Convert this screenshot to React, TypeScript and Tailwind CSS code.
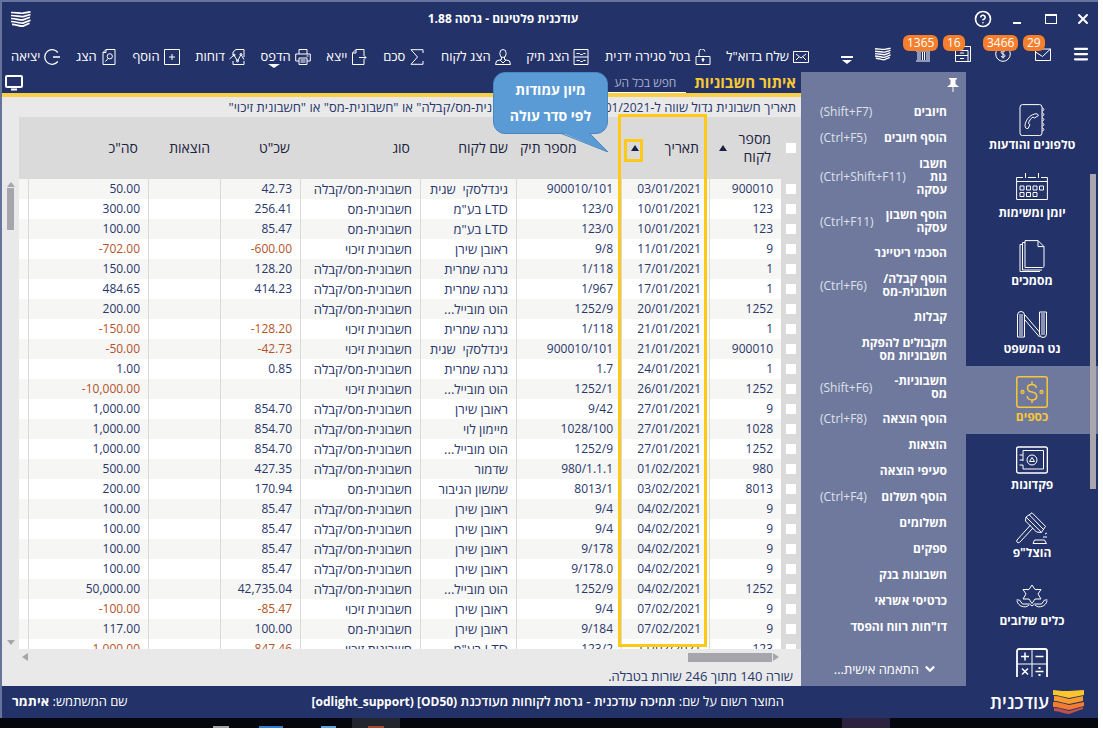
import type { ReactNode } from "react";
import { X, CircleHelp, Menu, ChevronDown } from "lucide-react";

interface IconProps {
  children: ReactNode;
  size?: string;
  box?: string;
}

const Icon = ({ children, size = "size-4", box = "0 0 16 16" }: IconProps) => (
  <svg className={`${size} shrink-0`} viewBox={box} fill="none" stroke="currentColor" strokeWidth="1" aria-hidden="true">
    {children}
  </svg>
);

const Pages = ({ size }: { size: string }) => (
  <svg className={`${size} shrink-0`} viewBox="0 0 20 16" fill="none" stroke="currentColor" strokeWidth="1.7" aria-hidden="true">
    <path d="M0 1.5C5 1.500 9 2.500 12 2.200L19.500.8M0 4.500C5 4.500 9 6 12 5.600L19.500 3.500M0 7.500C5 7.500 9 9.300 12 8.900L19 6.300M0 10.500C5 10.500 9 12.500 12 12.100L19.500 9.200M1 13.300C5 13.300 9 15.500 12 15.100L18.500 12.300" />
  </svg>
);

const actions: { label: string; icon: ReactNode; arrow?: boolean }[] = [
  {
    label: 'שלח בדוא"ל',
    icon: <Icon><path d="M.5 2.500h15v11H.5zM3 5l5 4 5-4M3 11l3-3M13 11l-3-3" /></Icon>,
  },
  {
    label: "בטל סגירה ידנית",
    icon: <Icon><path d="M1 7.500h14v8H1zM4 7.500V3.500a3 3 0 0 1 6-1M8 10v3" /><circle cx="8" cy="10.500" r="1" fill="currentColor" /></Icon>,
  },
  {
    label: "הצג תיק",
    icon: <Icon><path d="M1 .5h14v15H1zM1 8h14M3.500 4.500h3l1 1h2l1-1h2M3.500 11.500h3l1 1h2l1-1h2" /></Icon>,
  },
  {
    label: "הצג לקוח",
    icon: <Icon><ellipse cx="8" cy="4.500" rx="3.200" ry="4" /><path d="M6.500 8v2.500L1.500 12 .5 15.500h15l-1-3.500-5-1.500V8M5 11l3 3 3-3" /></Icon>,
  },
  {
    label: "סכם",
    icon: <Icon><path d="M14 4V.7H2L8.500 8 2 15.300h12V12" /></Icon>,
  },
  {
    label: "ייצא",
    icon: <Icon><path d="M13 6V.5H5L1.500 4v11.500H13V11M8 8.500h7M12.500 6l2.500 2.500-2.500 2.500M1.500 4H5V.5" /></Icon>,
  },
  {
    label: "הדפס",
    arrow: true,
    icon: <Icon><path d="M4 5V.5h8V5M4 12H.7V5h14.600v7H12M4 9h8v6.500H4zM5.500 11h5M5.500 13h5M11.500 7h2" /></Icon>,
  },
  {
    label: "דוחות",
    icon: <Icon><path d="M4 6V3l3-2.500h8V8M4 12v3.500h11V12M.5 10 5 6l3.500 6L12 5.500l3 5" /><circle cx="5" cy="6" r="1" /><circle cx="8.500" cy="12" r="1" /><circle cx="12" cy="5.500" r="1" /></Icon>,
  },
  {
    label: "הוסף",
    icon: <Icon><path d="M.5.5h15v15H.5zM8 5v6M5 8h6" /></Icon>,
  },
  {
    label: "הצג",
    icon: <Icon><path d="M5 .5h9v15H2V3.500zM2 3.500h3v-3M7 9.500 4.500 12.500" /><circle cx="8.800" cy="7.300" r="2.600" /></Icon>,
  },
  {
    label: "יציאה",
    icon: <Icon><path d="M13.800 3.500a7.300 7.300 0 1 0 0 9M9 8h7" strokeWidth="1.300" /></Icon>,
  },
];

const alerts = [
  { count: 29, label: "הודעות", icon: <Icon><path d="M.5 3h15v11.500H.5zM.5 6l7 4.500L15.500 3" /></Icon> },
  { count: 3466, label: "חיובים פתוחים", icon: <Icon><circle cx="8" cy="8" r="7.300" /><path d="M10 5.500C9 4.500 6 4.500 6 6.300S10 8 10 9.800 7 11.500 6 10.300M8 3.500v9" /></Icon> },
  { count: 16, label: "תיקים", icon: <Icon><path d="M4 .5h11.500v15M.5 4.500H13v11H.5zM.5 9.500H13M5 12.500h4M5 7h4M15.500 15.500H13" /></Icon> },
  { count: 1365, label: "בנקים", icon: <Icon><path d="M1 5 8 1l7 4zM3 6v8M5 6v8M7.500 6v8M9.500 6v8M12 6v8M14 6v8M1 15h14" /></Icon> },
];

const menu: { label: string; keys?: string }[] = [
  { label: "חיובים", keys: "(Shift+F7)" },
  { label: "הוסף חיובים", keys: "(Ctrl+F5)" },
  { label: "חשבו\nנות\nעסקה", keys: "(Ctrl+Shift+F11)" },
  { label: "הוסף חשבון\nעסקה", keys: "(Ctrl+F11)" },
  { label: "הסכמי ריטיינר" },
  { label: "הוסף קבלה/\nחשבונית-מס", keys: "(Ctrl+F6)" },
  { label: "קבלות" },
  { label: "תקבולים להפקת\nחשבוניות מס" },
  { label: "חשבוניות-\nמס", keys: "(Shift+F6)" },
  { label: "הוסף הוצאה", keys: "(Ctrl+F8)" },
  { label: "הוצאות" },
  { label: "סעיפי הוצאה" },
  { label: "הוסף תשלום", keys: "(Ctrl+F4)" },
  { label: "תשלומים" },
  { label: "ספקים" },
  { label: "חשבונות בנק" },
  { label: "כרטיסי אשראי" },
  { label: 'דו"חות רווח והפסד' },
];

const modules: { label: string; active?: boolean; iconOnly?: boolean; icon: ReactNode }[] = [
  {
    label: "טלפונים והודעות",
    icon: <><rect x="4" y=".6" width="22" height="31" rx="2.500" /><path d="M26 4c2.500 0 2.500 3 0 3M26 9c2.500 0 2.500 3 0 3M26 14c2.500 0 2.500 3 0 3M26 19c2.500 0 2.500 3 0 3M26 24c2.500 0 2.500 3 0 3" /><path d="M18.500 10c2-.6 3.500 0 4 1.500l-4 2.500-1.500-1c-2.500 1.500-4 4-4.500 6.500l1.500 1.200-2 3.800c-2 .5-3-1-3-3 .5-5 4-10 9.500-11.500z" /></>,
  },
  {
    label: "יומן ומשימות",
    icon: <><path d="M7 5.500H.6v22h30.800v-22H25M12 5.500h8M.6 9.500h30.800M9.500 1v5M22.500 1v5" /><path d="M4 14h4v4H4zM10.500 14h4v4h-4zM17 14h4v4h-4zM23.500 14h4v4h-4zM4 20.500h4v4H4zM10.500 20.500h4v4h-4zM17 20.500h4v4h-4z" /></>,
  },
  {
    label: "מסמכים",
    icon: <><path d="M9 .6h13l6 6V26c0 1-.5 1.500-1.500 1.500H9zM22 .6v6h6M9 2.500H6.500v27.500H26M6.500 4.500H4v27h20" /></>,
  },
  {
    label: "נט המשפט",
    icon: <><path d="M1.500 29V7a3.500 3.500 0 0 1 7 0v22zM23.500 4h7v22a3.500 3.500 0 0 1-7 0zM9 7l14.500 17M9 12l14.500 17" /><path d="M4 6v22M6 6v22M26 5v22M28 5v22" strokeWidth="1.600" strokeOpacity=".6" /></>,
  },
  {
    label: "כספים",
    active: true,
    icon: <><rect x=".8" y=".8" width="30.400" height="30.400" rx="2" strokeWidth="1.500" /><path d="M20.500 12c-.5-2.500-2.500-3.500-4.500-3.500-6 0-6 6.500 0 7.500 6.500 1 6 8 0 8-3 0-4.500-1.500-4.800-4M16 5.500v3M16 24v3" strokeWidth="1.500" /><circle cx="6.500" cy="16" r="1.500" strokeWidth="1.300" /><circle cx="25.500" cy="16" r="1.500" strokeWidth="1.300" /></>,
  },
  {
    label: "פקדונות",
    icon: <><rect x=".6" y="3" width="30.800" height="26" rx="2" strokeWidth="1.400" /><path d="M7 6.500h20.500v18.500H7v-4M7 11v6M3.500 11H7V6.500M3.500 21H7M3.500 16H7" /><circle cx="16" cy="16" r="5" /><path d="m16 13.500 2.500 4h-5z" /></>,
  },
  {
    label: 'הוצל"פ',
    icon: <><path d="m16 .8 13.500 13.500-4 6L10 5zM13.500 3 27.500 17.500M10 5l-.5 4 11 11 5 .5M17 16 3.500 30.500c-2 1-3.500-1-2.500-2.500L14.500 13M18.500 28h10l2 3.500H17zM27 25h4M29 22l2-1" /></>,
  },
  {
    label: "כלים שלובים",
    icon: <><path d="m16 5 3 4.500h6l-3 4.500 3 5h-6l-3 4.500-3-4.500H7l3-5-3-4.500h6z" /><path d="M.5 20h3l3 4h7l2.500 2 2.500-2h7l3-4h3M1 21c1 5 8 8 12 4M31 21c-1 5-8 8-12 4" /></>,
  },
  {
    label: "מחשבון",
    iconOnly: true,
    icon: <><path d="M1 32V3a2 2 0 0 1 2-2h26a2 2 0 0 1 2 2v29" strokeWidth="1.800" /><path d="M16 1v31M1 16h30" /><path d="M5 8.500h8M9 4.500v8M19.500 8.500h8M6 20.500l6 6M12 20.500l-6 6M19.500 23.500h8" strokeWidth="1.500" /><path d="M23.500 19v2M23.500 26v2" strokeWidth="2" /></>,
  },
];

const full = "חשבונית-מס/קבלה";
const tax = "חשבונית-מס";
const credit = "חשבונית זיכוי";

// client, date, file, client name, type, fee, total
const rows: string[][] = [
  ["900010", "03/01/2021", "900010/101", "גינדלסקי  שגית", full, "42.73", "50.00"],
  ["123", "10/01/2021", "123/0", 'LTD בע"מ', tax, "256.41", "300.00"],
  ["123", "10/01/2021", "123/0", 'LTD בע"מ', tax, "85.47", "100.00"],
  ["9", "11/01/2021", "9/8", "ראובן שירן", credit, "-600.00", "-702.00"],
  ["1", "17/01/2021", "1/118", "גרגה שמרית", full, "128.20", "150.00"],
  ["1", "17/01/2021", "1/967", "גרגה שמרית", full, "414.23", "484.65"],
  ["1252", "20/01/2021", "1252/9", "הוט מובייל...", full, "", "200.00"],
  ["1", "21/01/2021", "1/118", "גרגה שמרית", credit, "-128.20", "-150.00"],
  ["900010", "21/01/2021", "900010/101", "גינדלסקי  שגית", credit, "-42.73", "-50.00"],
  ["1", "24/01/2021", "1.7", "גרגה שמרית", full, "0.85", "1.00"],
  ["1252", "26/01/2021", "1252/1", "הוט מובייל...", credit, "", "-10,000.00"],
  ["9", "27/01/2021", "9/42", "ראובן שירן", full, "854.70", "1,000.00"],
  ["1028", "27/01/2021", "1028/100", "מיימון לוי", full, "854.70", "1,000.00"],
  ["1252", "27/01/2021", "1252/9", "הוט מובייל...", full, "854.70", "1,000.00"],
  ["980", "01/02/2021", "980/1.1.1", "שדמור", full, "427.35", "500.00"],
  ["8013", "03/02/2021", "8013/1", "שמשון הגיבור", tax, "170.94", "200.00"],
  ["9", "04/02/2021", "9/4", "ראובן שירן", full, "85.47", "100.00"],
  ["9", "04/02/2021", "9/4", "ראובן שירן", full, "85.47", "100.00"],
  ["9", "04/02/2021", "9/178", "ראובן שירן", full, "85.47", "100.00"],
  ["9", "04/02/2021", "9/178.0", "ראובן שירן", full, "85.47", "100.00"],
  ["1252", "04/02/2021", "1252/9", "הוט מובייל...", full, "42,735.04", "50,000.00"],
  ["9", "07/02/2021", "9/4", "ראובן שירן", credit, "-85.47", "-100.00"],
  ["9", "07/02/2021", "9/184", "ראובן שירן", tax, "100.00", "117.00"],
  ["123", "11/02/2021", "123/2", 'LTD בע"מ', credit, "-847.46", "-1,000.00"],
];

const TitleBar = () => (
  <div className="flex h-[33px] items-center">
    <button aria-label="סגור" className="flex w-[30px] justify-center"><X className="size-4" strokeWidth={3} /></button>
    <button aria-label="הגדל" className="flex w-[34px] justify-center"><span className="block h-[10px] w-3 border border-t-2 border-white" /></button>
    <button aria-label="מזער" className="flex w-[34px] justify-center pt-2"><span className="block h-[2px] w-2 bg-white" /></button>
    <button aria-label="עזרה" className="flex w-[34px] justify-center"><CircleHelp className="size-[18px]" strokeWidth={2.200} /></button>
    <h1 className="flex-1 text-center text-xs font-bold">עודכנית פלטינום - גרסה 1.88</h1>
    <div className="flex w-[38px] justify-center"><Pages size="h-4 w-5" /></div>
  </div>
);

const Toolbar = () => (
  <div className="flex h-[37px]">
    <button aria-label="תפריט" className="flex w-[35px] items-center justify-center"><Menu className="size-[18px]" strokeWidth={3} /></button>
    {alerts.map((a) => (
      <button key={a.count} aria-label={a.label} className="relative flex w-10 items-center justify-center">
        {a.icon}
        <span className="absolute top-0 left-0 rounded-md bg-[#f57f2c] px-1 text-xs leading-4">{a.count}</span>
      </button>
    ))}
    <button aria-label="מסמכים אחרונים" className="flex w-10 items-center justify-center"><Pages size="h-[14px] w-4" /></button>
    <button aria-label="עוד" className="flex w-8 items-center justify-center pt-3">
      <svg className="h-2 w-3" viewBox="0 0 12 8" fill="currentColor"><path d="M0 0h12v2H0zM1 4h10L6 8z" /></svg>
    </button>
    <div className="flex flex-1 items-center justify-between pt-[6px] pr-[22px] pl-[9px]">
      {actions.map((a, i) => (
        <button key={i} className="relative flex items-center gap-1 text-[13px] whitespace-nowrap">
          {a.icon}
          {a.label}
          {a.arrow && (
            <svg className="absolute -bottom-[2px] left-2 h-1 w-3" viewBox="0 0 12 4" fill="currentColor"><path d="M0 0h12L6 4z" /></svg>
          )}
        </button>
      ))}
    </div>
  </div>
);

const Modules = () => (
  <nav className="relative w-[132px] shrink-0 overflow-hidden bg-[#233269] pt-[22px] pb-[9px] text-white">
    <div className="h-full overflow-hidden">
      {modules.map((m) => (
        <a
          key={m.label}
          href="#"
          aria-label={m.label}
          className={`flex h-[68px] flex-col items-center pt-[10px] text-xs font-bold ${m.active ? "bg-[#6f799e] text-[#f9c834]" : ""}`}
        >
          <Icon size="size-8" box="0 0 32 32">{m.icon}</Icon>
          {!m.iconOnly && <span className="leading-[18px]">{m.label}</span>}
        </a>
      ))}
    </div>
    <div className="absolute top-[102px] right-[2px] h-[315px] w-[6px] bg-[#a9a7ad]" />
  </nav>
);

const SubMenu = () => (
  <aside className="flex w-[165px] shrink-0 flex-col bg-[#6f799e] text-xs text-white">
    <button aria-label="נעץ" className="mt-[6px] mr-[6px] self-start">
      <svg className="h-[14px] w-[14px]" viewBox="0 0 14 14" fill="currentColor"><path d="M3 0h8v1l-1.500 1v4L13 9H1l3.500-3V2L3 1zM6.500 9h1v5h-1z" /></svg>
    </button>
    <ul className="mt-[13px] flex flex-1 flex-col gap-3 px-[19px]">
      {menu.map((m) => (
        <li key={m.label} className="min-h-[14px]">
          <a href="#" className="flex items-center justify-between leading-[13px]">
            <span className="font-bold whitespace-pre">{m.label}</span>
            {m.keys && <span dir="ltr" className="text-[#dfe2ea]">{m.keys}</span>}
          </a>
        </li>
      ))}
    </ul>
    <button className="mr-[29px] mb-2 flex items-center gap-1 self-start text-[13px]">
      <ChevronDown className="size-[14px]" strokeWidth={4} />
      התאמה אישית...
    </button>
  </aside>
);

const SortArrow = () => (
  <svg className="h-[6px] w-2 shrink-0" viewBox="0 0 8 6" fill="currentColor" aria-hidden="true"><path d="M4 0l4 6H0z" /></svg>
);

const cell = "overflow-hidden border-l border-[#dadada] px-2 text-right whitespace-pre";
const head = "px-[10px] text-right font-normal";

const Grid = () => (
  <div className="relative min-w-0 flex-1">
    <div className="h-full overflow-hidden bg-white">
      <table className="w-full table-fixed border-separate border-spacing-0 text-xs text-[#28366b]">
        <colgroup>
          <col className="w-5" />
          <col className="w-[72px]" />
          <col className="w-[88px]" />
          <col className="w-[105px]" />
          <col className="w-[96px]" />
          <col className="w-[120px]" />
          <col className="w-[80px]" />
          <col className="w-[72px]" />
          <col className="w-[120px]" />
          <col />
        </colgroup>
        <thead className="bg-[#dadada] text-sm leading-[18px] text-[#1c2340]">
          <tr className="h-[62px]">
            <th className="p-0"><input type="checkbox" aria-label="בחר הכל" className="mx-auto block size-[10px] appearance-none bg-white" /></th>
            <th className={head}>
              <span className="flex items-center justify-between"><span>מספר<br />לקוח</span><SortArrow /></span>
            </th>
            <th className={head}>
              <span className="flex items-center justify-between">תאריך <SortArrow /></span>
            </th>
            <th className="pl-1 text-left font-normal">מספר תיק</th>
            <th className="px-2 text-right font-normal whitespace-nowrap">שם לקוח</th>
            <th className={head}>סוג</th>
            <th className={head}>{'שכ"ט'}</th>
            <th className={head}>הוצאות</th>
            <th className={head}>{'סה"כ'}</th>
            <th />
          </tr>
        </thead>
        <tbody>
          {rows.map(([client, date, file, name, type, fee, total], i) => (
            <tr key={i} className="h-5 leading-[18px] odd:bg-[#f6f6f5]">
              <td className="bg-[#dadada] p-0">
                <input type="checkbox" aria-label={`שורה ${i + 1}`} className="mx-auto block size-[10px] appearance-none bg-white" />
              </td>
              <td className={cell}>{client}</td>
              <td className={cell}>{date}</td>
              <td className={cell}>{file}</td>
              <td className={`${cell} text-[13px]`}>{name}</td>
              <td className={`${cell} text-[13px]`}>{type}</td>
              <td dir="ltr" className={`${cell} ${fee.startsWith("-") ? "text-[#b4532a]" : ""}`}>{fee}</td>
              <td className={cell} />
              <td dir="ltr" className={`${cell} ${total.startsWith("-") ? "text-[#b4532a]" : ""}`}>{total}</td>
              <td />
            </tr>
          ))}
        </tbody>
      </table>
    </div>
    <div className="absolute -top-[3px] right-[94px] bottom-[2px] w-[89px] border-3 border-[#ffc917]" />
    <div className="absolute top-[22px] right-[158px] h-[23px] w-[19px] border-3 border-[#ffc917]" />
  </div>
);

const Callout = () => (
  <div className="absolute top-0 right-[193px] w-[115px]">
    <div className="rounded-xl border border-[#4a86c0] bg-[#5b9bd5] py-1 text-center text-sm leading-[26px] font-bold text-white">
      מיון עמודות<br />לפי סדר עולה
    </div>
    <svg className="absolute top-[60px] right-0 h-5 w-12" viewBox="0 0 48 20" fill="#5b9bd5"><path d="M0 0h29l19 20z" /><path d="M0 1l48 19L29 1" fill="none" stroke="#4a86c0" /></svg>
  </div>
);

const Invoices = () => (
  <main className="relative flex min-w-0 flex-1 flex-col bg-[#e9e9e9] text-[#28366b]">
    <div className="flex h-[25px] items-center border-b-4 border-[#f9cf45] bg-[#233269] pr-[5px] pl-[3px] text-white">
      <h2 className="text-[15px] font-bold whitespace-nowrap text-[#f9c834]">איתור חשבוניות</h2>
      <input
        type="text"
        aria-label="חיפוש"
        placeholder="חפש בכל הע"
        className="mr-2 h-[21px] w-[78px] border-b border-white pr-[10px] text-xs outline-none placeholder:text-[#a9b0c9]"
      />
      <svg className="mr-auto h-4 w-[18px]" viewBox="0 0 18 16" fill="none" stroke="currentColor" strokeWidth="2"><rect x="1" y="1" width="16" height="11" rx="1" /><path d="M6 14.500h6" /></svg>
    </div>
    <p className="h-5 overflow-hidden pr-[5px] text-[13px] leading-5 whitespace-nowrap">
      תאריך חשבונית גדול שווה ל-<span className="text-xs">01/01/2021</span> וכן סוג הוא {'"חשבונית-מס/קבלה" או "חשבונית-מס" או "חשבונית זיכוי"'}
    </p>
    <div className="flex min-h-0 flex-1">
      <Grid />
      <div className="flex w-[17px] flex-col items-center pt-[65px] pb-1 text-[#a7a5ac]">
        <svg className="h-[6px] w-2" viewBox="0 0 8 6" fill="currentColor"><path d="M4 0l4 5H0z" /></svg>
        <div className="h-[42px] w-[7px] bg-current" />
        <svg className="mt-auto h-[5px] w-2" viewBox="0 0 8 5" fill="currentColor"><path d="M0 0h8L4 5z" /></svg>
      </div>
    </div>
    <div className="flex h-4 items-center pr-[22px] pl-5 text-[#a7a5ac]">
      <svg className="h-2 w-[7px]" viewBox="0 0 7 8" fill="currentColor"><path d="M1 0l6 4-6 4z" /></svg>
      <div className="h-[9px] w-[84px] bg-current" />
      <svg className="mr-auto h-2 w-[6px]" viewBox="0 0 6 8" fill="currentColor"><path d="M6 0v8L0 4z" /></svg>
    </div>
    <p className="h-[21px] pr-2 text-[13px] leading-[22px]">שורה 140 מתוך 246 שורות בטבלה.</p>
    <Callout />
  </main>
);

const Footer = () => (
  <footer className="flex h-8 items-center bg-[#233269] pr-[14px] pl-[10px] text-[13px] text-white">
    <svg className="h-6 w-[31px]" viewBox="0 0 31 24" aria-hidden="true">
      <path d="M0 0c7 1 11 1 16 1L31 0v5l-15 3C10 7 6 5 0 5z" fill="#fcc52c" />
      <path d="M1 6c6 0 10 2 15 3l14-3v5l-14 3C10 13 6 11 1 11z" fill="#f99b2d" />
      <path d="M0 12c7 0 11 2 16 3l15-3v4l-15 4c-6-1-10-3-16-3z" fill="#f47b2f" />
      <path d="M1 18c6 0 10 2 15 3l14-4v2l-14 5c-5 0-9-3-15-3z" fill="#c0524e" />
    </svg>
    <span className="mr-1 w-[202px] text-lg leading-6 font-semibold whitespace-nowrap">עודכנית</span>
    <p className="mr-[63px] whitespace-nowrap">
      המוצר רשום על שם:{" "}
      <b className="font-semibold">תמיכה עודכנית - גרסת לקוחות מעודכנת <bdi dir="ltr" className="text-xs font-bold">[odlight_support) [OD50)</bdi></b>
    </p>
    <p className="mr-auto whitespace-nowrap">שם המשתמש: <b>איתמר</b></p>
  </footer>
);

const App = () => (
  <div className="h-screen bg-white pr-[5px] pb-[2px] font-['Open_Sans','Noto_Sans',sans-serif]">
    <div dir="rtl" className="flex h-full flex-col overflow-hidden">
      <div className="flex min-h-0 flex-1 flex-col border-t-2 border-l-2 border-[#66749d]">
        <header className="bg-[#233269] text-white">
          <TitleBar />
          <Toolbar />
        </header>
        <div className="flex min-h-0 flex-1">
          <Modules />
          <SubMenu />
          <Invoices />
        </div>
        <Footer />
      </div>
      <div className="flex h-[10px] items-end bg-[#05070f]">
        <div className="mr-[208px] h-full w-12 bg-[#2e2140]" />
        <div className="mr-[442px] flex h-full w-12 items-end justify-center bg-[#22242e]"><div className="h-[2px] w-4 bg-[#a5482c]" /></div>
        <div className="mr-4 h-[2px] w-[15px] bg-[#5ba4e0]" />
        <div className="mr-[38px] h-[2px] w-6 bg-[#2f80d0]" />
        <div className="mr-[30px] h-[2px] w-4 bg-[#9aa4ae]" />
      </div>
    </div>
  </div>
);

export default App;
